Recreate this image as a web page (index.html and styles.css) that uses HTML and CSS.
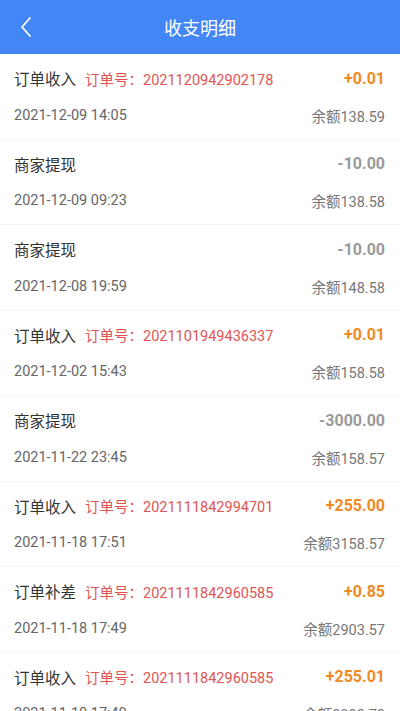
FILE: index.html
```html
<html>

<head>
  <meta name="viewport" content="width=device-width, initial-scale=1" />
  <link rel="stylesheet" href="styles.css">
  <title>收支明细</title>
</head>

<body>
  <div class="header">
    <svg class="back" width="12" height="22" viewBox="0 0 12 22">
      <path d="M10 2 L2 11 L10 20" fill="none" stroke="#fff" stroke-width="1.8" stroke-linecap="round" stroke-linejoin="round" />
    </svg>
    <div class="title">收支明细</div>
  </div>

  <div class="list">
    <div class="row">
      <div class="line">
        <span class="name">订单收入</span>
        <span class="order">订单号：2021120942902178</span>
        <span class="amount plus">+0.01</span>
      </div>
      <div class="line sub">
        <span>2021-12-09 14:05</span>
        <span class="balance">余额138.59</span>
      </div>
    </div>
    <div class="row">
      <div class="line">
        <span class="name">商家提现</span>
        <span class="amount minus">-10.00</span>
      </div>
      <div class="line sub">
        <span>2021-12-09 09:23</span>
        <span class="balance">余额138.58</span>
      </div>
    </div>
    <div class="row">
      <div class="line">
        <span class="name">商家提现</span>
        <span class="amount minus">-10.00</span>
      </div>
      <div class="line sub">
        <span>2021-12-08 19:59</span>
        <span class="balance">余额148.58</span>
      </div>
    </div>
    <div class="row">
      <div class="line">
        <span class="name">订单收入</span>
        <span class="order">订单号：2021101949436337</span>
        <span class="amount plus">+0.01</span>
      </div>
      <div class="line sub">
        <span>2021-12-02 15:43</span>
        <span class="balance">余额158.58</span>
      </div>
    </div>
    <div class="row">
      <div class="line">
        <span class="name">商家提现</span>
        <span class="amount minus">-3000.00</span>
      </div>
      <div class="line sub">
        <span>2021-11-22 23:45</span>
        <span class="balance">余额158.57</span>
      </div>
    </div>
    <div class="row">
      <div class="line">
        <span class="name">订单收入</span>
        <span class="order">订单号：2021111842994701</span>
        <span class="amount plus">+255.00</span>
      </div>
      <div class="line sub">
        <span>2021-11-18 17:51</span>
        <span class="balance">余额3158.57</span>
      </div>
    </div>
    <div class="row">
      <div class="line">
        <span class="name">订单补差</span>
        <span class="order">订单号：2021111842960585</span>
        <span class="amount plus">+0.85</span>
      </div>
      <div class="line sub">
        <span>2021-11-18 17:49</span>
        <span class="balance">余额2903.57</span>
      </div>
    </div>
    <div class="row">
      <div class="line">
        <span class="name">订单收入</span>
        <span class="order">订单号：2021111842960585</span>
        <span class="amount plus">+255.01</span>
      </div>
      <div class="line sub">
        <span>2021-11-18 17:49</span>
        <span class="balance">余额2902.72</span>
      </div>
    </div>
  </div>
</body>

</html>
```

FILE: styles.css
```css
body {
  margin: 0;
  font-family: Roboto, "Noto Sans CJK SC", sans-serif;
  background-color: #fff;
  overflow: hidden;
}

.header {
  height: 54px;
  background-color: #4387f6;
  display: flex;
  align-items: center;
  justify-content: center;
  position: relative;
}

.back {
  position: absolute;
  left: 20px;
  top: 16px;
}

.title {
  color: #fff;
  font-size: 18px;
}

.row {
  box-sizing: border-box;
  height: 85.5px;
  padding: 14px 15px 0 14px;
  border-bottom: 1.5px solid #f4f4f4;
}

.line {
  display: flex;
  align-items: center;
  height: 20px;
}

.name {
  font-size: 15.5px;
  color: #333;
}

.order {
  margin-left: 9px;
  font-size: 14.5px;
  color: #e05553;
}

.amount {
  margin-left: auto;
  font-size: 16px;
  font-weight: bold;
}

.plus {
  color: #f08a1f;
}

.minus {
  color: #9a9a9a;
}

.sub {
  margin-top: 17px;
  justify-content: space-between;
  font-size: 14.5px;
  color: #666;
}

.balance {
  color: #777;
}
```
